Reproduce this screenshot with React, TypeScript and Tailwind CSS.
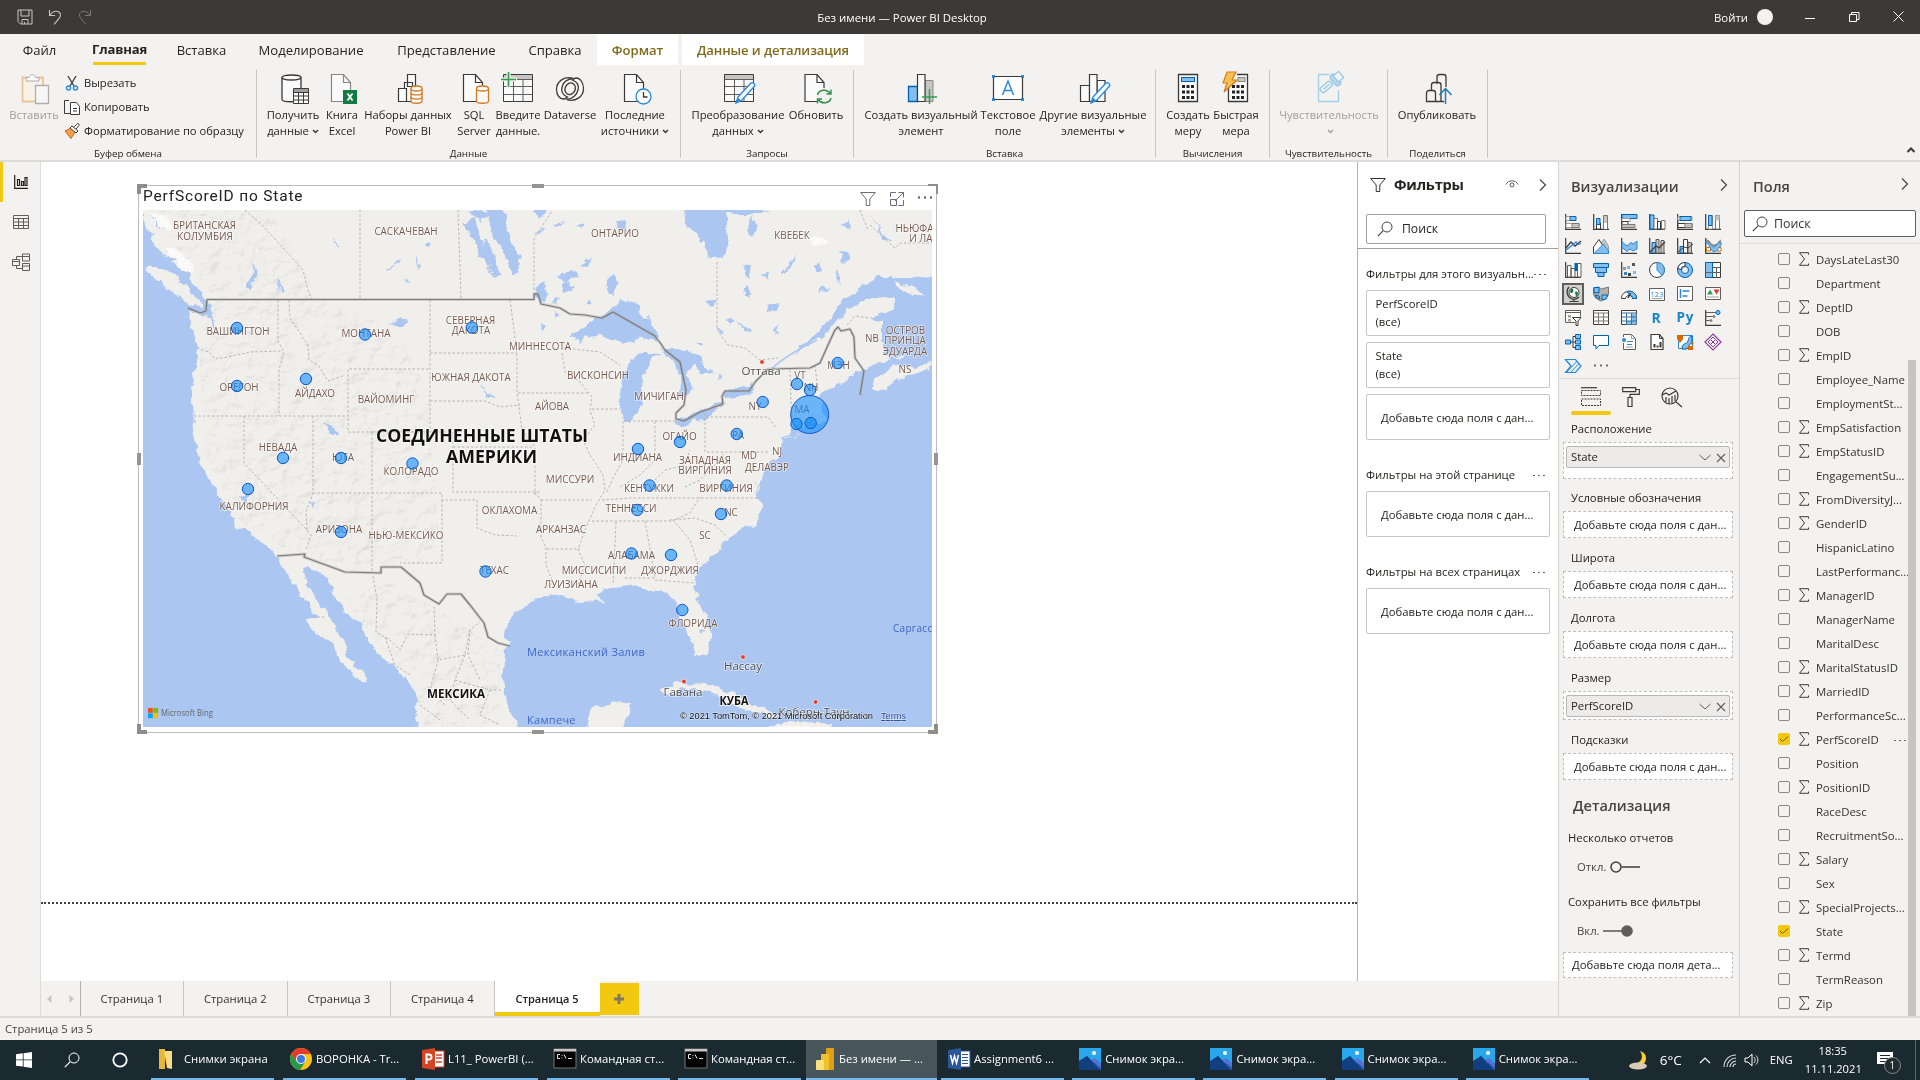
import React from "react";

const K = "#3b3a39";
const B = "#2b88d8";
const LB = "#83beec";
const G = "#a19f9d";

type SvgProps = { w?: number; h?: number; vb?: string; children: React.ReactNode; className?: string };
const S = ({ w = 16, h = 16, vb, children, className = "" }: SvgProps) => (
  <svg width={w} height={h} viewBox={vb ?? `0 0 ${w} ${h}`} fill="none" className={`shrink-0 overflow-visible ${className}`}>
    {children}
  </svg>
);

const ChevronRight = () => (
  <S w={8} h={12}><path d="M1 .5 6.500 6 1 11.500" stroke="#444" strokeWidth="1.200" /></S>
);
const ChevronDown = ({ c = "#333" }: { c?: string }) => (
  <S w={7} h={5} className="inline-block ml-[3px] mb-[1px]"><path d="M1 1l2.500 2.500L6 1" stroke={c} strokeWidth="1.400" /></S>
);
const Search = ({ c = "#444" }: { c?: string }) => (
  <S><circle cx="10" cy="6" r="5" stroke={c} /><path d="M6.300 9.700 .8 15.200" stroke={c} strokeWidth="1.200" /></S>
);
const Funnel = ({ c = "#333" }: { c?: string }) => (
  <S><path d="M.7 1.500h14.600L9.800 8v6.500H6.200V8z" stroke={c} /></S>
);

/* ---------- title bar ---------- */
const TitleBar = () => (
  <header className="flex h-[34px] items-center bg-[#3b3a39] text-white">
    <div className="flex w-[600px] items-center pl-[17px]">
      <S><path d="M1 1h14v14H3.500L1 12.500zM4 1v6h8V1M5 15v-4.500h6V15M7.500 15v-2" stroke="#c8c6c4" /></S>
      <S className="ml-[15px]"><path d="M1.500 1v5.500H7M1.800 6.200C4 2.500 8.500 1 11.500 3.500c3 3-.5 6-5.500 12" stroke="#c8c6c4" strokeWidth="1.100" /></S>
      <S className="ml-[12px]"><path d="M14.500 1v5.500H9M14.200 6.200C12 2.500 7.500 1 4.500 3.500c-3 3 .5 6 5.500 12" stroke="#797775" /></S>
    </div>
    <div className="w-[604px] pt-[1px] text-center text-[11.400px]">Без имени — Power BI Desktop</div>
    <div className="flex flex-1 items-center pl-[510px] text-[11.400px]">
      <span className="w-[33px] whitespace-nowrap pt-[1px]">Войти</span>
      <span className="ml-[10px] h-4 w-4 shrink-0 rounded-full bg-[#f3f2f1]" />
      <S w={10} h={10} className="ml-[32px]"><path d="M0 6.500h10" stroke="#fff" /></S>
      <S w={11} h={10} className="ml-[34px]"><path d="M.5 2.500h7v7h-7zM2.500 2.500v-2h7.500v7H7.500" stroke="#fff" /></S>
      <S w={11} h={11} className="ml-[33px]"><path d="M.5.5l10 10M10.500.5l-10 10" stroke="#fff" /></S>
    </div>
  </header>
);

/* ---------- menu ---------- */
const menu: [string, string][] = [
  ["Файл", "ml-[23px] w-[33px] pt-[2px]"],
  ["Главная", "ml-[37px] w-[53px] font-bold tracking-[-0.2px] border-b-[3px] border-[#f2c811] pt-[4px]"],
  ["Вставка", "ml-[31px] w-[49px] pt-[2px]"],
  ["Моделирование", "ml-[32px] w-[106px] pt-[2px]"],
  ["Представление", "ml-[33px] w-[99px] pt-[2px]"],
  ["Справка", "ml-[32px] w-[54px] pt-[2px]"],
  ["Формат", "ml-[15px] w-[81px] bg-white pt-[2px] font-semibold text-[#7f6b1c]"],
  ["Данные и детализация", "ml-[4px] w-[182px] bg-white pt-[2px] font-semibold tracking-[-0.1px] text-[#7f6b1c]"],
];
const Menu = () => (
  <nav className="flex h-[31px] bg-[#f3f2f1] text-[13.100px]">
    {menu.map(([t, c]) => (
      <div key={t} className={`flex items-center justify-center whitespace-nowrap ${c}`}>{t}</div>
    ))}
  </nav>
);

/* ---------- ribbon icons (32x32) ---------- */
const Pencil = () => (
  <>
    <path d="M15 24 27.500 10.500a2.300 2.300 0 0 1 3.500 3.300L18.500 27.500 13 30z" fill="#f3f9fd" stroke={B} strokeWidth="1.300" />
    <path d="M14.800 24.500l3.500 3.200L12.500 30z" fill={B} />
  </>
);
const Doc = ({ c = K }: { c?: string }) => (
  <><path d="M3.500 1.500h12l7 8v19h-19z" fill="#fafafa" stroke={c} strokeWidth="1.200" /><path d="M15.500 1.500v8h7" stroke={c} strokeWidth="1.200" /></>
);
const Cyl = ({ x, y, w, h, c, mid = false }: { x: number; y: number; w: number; h: number; c: string; mid?: boolean }) => (
  <g stroke={c} strokeWidth="1.300" fill="#fafafa">
    <path d={`M${x} ${y}v${h}c0 3 ${w} 3 ${w} 0v-${h}`} />
    <ellipse cx={x + w / 2} cy={y} rx={w / 2} ry="2.500" />
    {mid && <path d={`M${x} ${y + h / 3}c0 3 ${w} 3 ${w} 0M${x} ${y + (2 * h) / 3}c0 3 ${w} 3 ${w} 0`} fill="none" />}
  </g>
);
const Grid = () => (
  <><path d="M1.500 1.500h29v27h-29z" fill="#fafafa" stroke={K} /><path d="M2 2h28v4H2z" fill="#c8c6c4" /><path d="M1.500 6.500h29M1.500 13.500h29M1.500 21.500h29M11.500 6.500v22M21 6.500v22" stroke="#605e5c" /></>
);
const Calc = ({ x = 0 }: { x?: number }) => (
  <g transform={`translate(${x} 0)`}>
    <path d="M6.500 1.500h19v27h-19z" fill="#fafafa" stroke={K} strokeWidth="1.300" />
    {[12, 17.500, 23].map((y) => [10, 14.500, 19].map((a) => <rect key={`${a}-${y}`} x={a} y={y} width="3" height="3" fill="#222" />))}
  </g>
);
const RI: Record<string, React.ReactNode> = {
  get: <g transform="translate(1 0)"><Cyl x={4} y={4.500} w={19} h={22} c={K} /><path d="M15.500 15.500h15v15h-15z" fill="#fff" stroke={K} /><path d="M16 16h14v3.500H16z" fill="#a19f9d" /><path d="M15.500 19.500h15M15.500 23h15M15.500 27h15M20.500 19.500v11M25.500 19.500v11" stroke={K} /></g>,
  excel: <g transform="translate(2 0)"><Doc c="#8a8886" /><rect x="15" y="17" width="14" height="14" fill="#107c41" /><path d="M19.500 20.500l5 7M24.500 20.500l-5 7" stroke="#fff" strokeWidth="1.800" /></g>,
  pbi: <g transform="translate(4 0)"><path d="M11.500 1.500h8v12h-8zM8.500 9.500h8v19h-8z" fill="#fafafa" stroke={K} strokeWidth="1.200" /><path d="M2.500 15.500h8v13h-8z" fill="#fafafa" stroke={K} strokeWidth="1.200" /><Cyl x={15} y={15.500} w={11} h={12.500} c="#d67a1e" mid /></g>,
  sql: <g transform="translate(2 0)"><Doc /><Cyl x={16.500} y={15.500} w={12} h={12.500} c="#d67a1e" /></g>,
  enter: <><Grid /><path d="M6.500-1v15M0 6.500h15" stroke="#f3f2f1" strokeWidth="4" /><path d="M6.500-1v15M-1 6.500h15" stroke="#2f9e4f" strokeWidth="1.600" /></>,
  dv: <g transform="translate(-.5 0)"><path d="M20 5.500c-9-3-17 3-17 11 0 6 3.500 9.500 7 9.500 2 0 3-.8 4-2-5-2-6.500-6-5.500-10 1-4.500 5-8 11.500-8.500z" fill="#fafafa" stroke={K} strokeWidth="1.300" /><path d="M13 26.500c9 3 17-3 17-11 0-6-3.500-10.500-7-10.500-2 0-3 .8-4 2 5 2 6.500 6 5.500 10-1 4.500-5 9-11.500 9.500z" fill="#fafafa" stroke={K} strokeWidth="1.300" /><ellipse cx="16.500" cy="15.500" rx="5" ry="6" transform="rotate(25 16 16)" stroke={K} strokeWidth="1.300" /></g>,
  recent: <g transform="translate(2 0)"><Doc /><circle cx="22.500" cy="23.500" r="7.500" fill="#fff" stroke={B} strokeWidth="1.300" /><path d="M22.500 19v5h4" stroke={K} strokeWidth="1.300" /></g>,
  transform: <g transform="translate(1 0)"><Grid /><Pencil /></g>,
  refresh: <g transform="translate(1.500 0)"><Doc /><circle cx="22.500" cy="23.500" r="8.500" fill="#f3f2f1" /><path d="M16 22c1-5 9-7 13-1.500M29.500 16.500v4.500H25M29.500 25c-1 5-9 7-13 1.500M16 30.500V26h4.500" stroke="#2f8f46" strokeWidth="1.400" /></g>,
  visual: <g transform="translate(1 0)"><path d="M19 7.500h8v21h-8z" fill="#c8c6c4" stroke="#8a8886" /><path d="M2.500 13.500h9v15h-9z" fill={LB} stroke="#0063b1" strokeWidth="1.300" /><path d="M11.500 1.500h7.500v27h-7.500z" fill="#fafafa" stroke={K} strokeWidth="1.200" /><path d="M23.500 16v15M16 24h15" stroke="#2f9e4f" strokeWidth="1.400" /></g>,
  text: <><path d="M1.500 3.500h29v23h-29z" fill="#fff" stroke={K} strokeWidth="1.200" />{[[0, 2], [29, 2], [0, 25], [29, 25]].map(([x, y]) => <rect key={`${x}-${y}`} x={x} y={y} width="3" height="3" fill={B} />)}<path d="M10.500 22 16 8l5.500 14M12.500 17.500h7" stroke={B} strokeWidth="1.500" /></>,
  other: <g transform="translate(1 0)"><path d="M19 7.500h8v21h-8zM2.500 12.500h9v16h-9z" fill="#fafafa" stroke={K} strokeWidth="1.200" /><path d="M11.500 1.500h7.500v27h-7.500z" fill="#fafafa" stroke={K} strokeWidth="1.200" /><Pencil /></g>,
  calc: <><Calc /><rect x="9.500" y="4.500" width="13" height="4" fill={LB} stroke="#0063b1" /></>,
  quick: <><Calc x={2} /><path d="M5 0h12v11H5z" fill="#f3f2f1" /><rect x="18" y="4.500" width="7" height="4" fill="#c8c6c4" stroke="#8a8886" /><path d="M7-1h9l-4 8h5L4 19l3-9H3z" fill="#f8c04e" stroke="#d67a1e" strokeWidth="1.200" /></>,
  sens: <g opacity=".75" transform="translate(1 0)"><path d="M15 1.500H4.500v27h20V17" stroke="#8cc4e0" strokeWidth="1.400" /><g transform="rotate(-40 20 10)" stroke="#7db9da" strokeWidth="1.300" fill="#eef5f9"><rect x="20" y="2" width="6" height="13" rx="3" fill="#a8cfe2" /><path d="M24 4h7v8h-7z" /><rect x="5" y="5" width="13" height="6" rx="2" /><path d="M8 8h8" /></g></g>,
  publish: <g transform="translate(3 0)"><path d="M13 11V4a2.500 2.500 0 0 1 2.500-2.500h4A2.500 2.500 0 0 1 22 4v10M7.500 18v-6a2.500 2.500 0 0 1 2.500-2.500h4.500A2.500 2.500 0 0 1 17 12v16.500M2.500 28.500V20A2.500 2.500 0 0 1 5 17.500h4a2.500 2.500 0 0 1 2.500 2.500v8.500zM11 28.500h9" stroke={K} strokeWidth="1.300" /><path d="M21.500 31V16M15.500 22l6-6.500 6 6.500" stroke="#1a7db8" strokeWidth="1.500" /></g>,
  paste: <g opacity=".55" transform="translate(2 0)"><path d="M9 4.500H2.500v24h14M17 4.500h6v8" stroke="#e8a04c" strokeWidth="1.800" fill="#fdf1dc" /><path d="M6 8V4.500h3c.5-4 6-4 6.500 0H19V8z" fill="#fff" stroke="#797775" /><path d="M15.500 12.500h13v18h-13z" fill="#fafafa" stroke="#797775" strokeWidth="1.300" /></g>,
};

type Item = { i: string; a: string; b?: string; c: string; down?: boolean; off?: boolean };
const RibbonItem = ({ i, a, b, c, down, off }: Item) => (
  <div className={`flex shrink-0 flex-col items-center whitespace-nowrap leading-4 ${off ? "text-[#a19f9d]" : ""} ${c}`}>
    <S w={32} h={32}>{RI[i]}</S>
    <span className="mt-[2px]">{a}</span>
    <span className="h-4">{b}{down && <ChevronDown c={off ? "#a19f9d" : "#333"} />}</span>
  </div>
);
const groups: { t: string; c: string; items: Item[] }[] = [
  { t: "Данные", c: "w-[424px]", items: [
    { i: "get", a: "Получить", b: "данные", down: true, c: "ml-[9px] w-[54px]" },
    { i: "excel", a: "Книга", b: "Excel", c: "ml-[6px] w-[32px]" },
    { i: "pbi", a: "Наборы данных", b: "Power BI", c: "ml-[6px] w-[88px]" },
    { i: "sql", a: "SQL", b: "Server", c: "ml-[5px] w-[34px]" },
    { i: "enter", a: "Введите", b: "данные.", c: "ml-[4px] w-[46px]" },
    { i: "dv", a: "Dataverse", c: "ml-[2px] w-[54px]" },
    { i: "recent", a: "Последние", b: "источники", down: true, c: "ml-[5px] w-[66px]" },
  ] },
  { t: "Запросы", c: "w-[173px]", items: [
    { i: "transform", a: "Преобразование", b: "данных", down: true, c: "ml-[9px] w-[96px]" },
    { i: "refresh", a: "Обновить", c: "ml-[3px] w-[54px]" },
  ] },
  { t: "Вставка", c: "w-[302px]", items: [
    { i: "visual", a: "Создать визуальный", b: "элемент", c: "ml-[11px] w-[112px]" },
    { i: "text", a: "Текстовое", b: "поле", c: "ml-[4px] w-[54px]" },
    { i: "other", a: "Другие визуальные", b: "элементы", down: true, c: "ml-[4px] w-[108px]" },
  ] },
  { t: "Вычисления", c: "w-[114px]", items: [
    { i: "calc", a: "Создать", b: "меру", c: "ml-[10px] w-[44px]" },
    { i: "quick", a: "Быстрая", b: "мера", c: "ml-[4px] w-[44px]" },
  ] },
  { t: "Чувствительность", c: "w-[118px]", items: [
    { i: "sens", a: "Чувствительность", b: "", down: true, off: true, c: "ml-[10px] w-[98px]" },
  ] },
  { t: "Поделиться", c: "w-[100px]", items: [
    { i: "publish", a: "Опубликовать", c: "ml-[10px] w-[78px]" },
  ] },
];
const Ribbon = () => (
  <section className="flex h-[97px] border-b-2 border-[#dddcda] bg-[#f3f2f1] text-[11.200px]">
    <div className="mt-[5px] flex h-[88px] w-[257px] flex-col border-r border-[#c8c6c4]">
      <div className="flex h-[78px] shrink-0 pt-[3px]">
        <RibbonItem i="paste" a="Вставить" off c="ml-[10px] w-[48px]" />
        <div className="ml-[7px] flex flex-col whitespace-nowrap">
          <div className="-mt-[2px] flex h-6 items-center gap-[5px]">
            <S w={14} h={16}><path d="M3 1l6 10M11 1 5 11" stroke={K} strokeWidth="1.300" /><circle cx="3.500" cy="13" r="2" stroke={B} strokeWidth="1.400" /><circle cx="10.500" cy="13" r="2" stroke={B} strokeWidth="1.400" /></S>Вырезать
          </div>
          <div className="flex h-6 items-center gap-[5px]">
            <S w={14} h={16}><path d="M5 14.500H-.5V1.500H4" stroke={K} /><path d="M5.500 3.500h6l3 4v8h-9z" fill="#fff" stroke={K} /><path d="M8 9.500h4M8 12h4" stroke={K} /></S>Копировать
          </div>
          <div className="flex h-6 items-center gap-[5px]">
            <S w={14} h={16}><path d="M0 8l6-3 4 4-4 6.500z" fill="#f6a04a" stroke="#c8641a" /><path d="M5 5l6 5 2-2-6-5zM9 4l3.500-3.500c1.500 0 2 1 1.500 2L11 6" fill="#fff" stroke={K} /></S>Форматирование по образцу
          </div>
        </div>
      </div>
      <div className="text-center text-[9.800px] leading-[11px]">Буфер обмена</div>
    </div>
    {groups.map((g) => (
      <div key={g.t} className={`mt-[5px] flex h-[88px] shrink-0 flex-col border-r border-[#c8c6c4] ${g.c}`}>
        <div className="flex h-[78px] shrink-0 pt-[3px]">{g.items.map((it) => <RibbonItem key={it.i} {...it} />)}</div>
        <div className="text-center text-[9.800px] leading-[11px]">{g.t}</div>
      </div>
    ))}
    <div className="flex flex-1 items-end justify-end pr-[5px] pb-[7px]"><S w={8} h={6}><path d="M.5 5 4 1.500 7.500 5" stroke={K} strokeWidth="2" /></S></div>
  </section>
);

/* ---------- map ---------- */
const land = "M143 205V218L148 232 157 247 167 260 180 268 192 283 203 293 206 300 209 303 214 322 209 316 203 314 189 311 192 330 195 345 197 355 195 375 192 390 192 410 195 420 192 432 194 445 200 457 204 472 212 483 219 497 226 507 234 518 237 528 245 530 254 537 265 545 273 551 277 556 282 563 287 573 293 585 300 595 307 602 316 615 305 620 317 633 333 645 338 658 353 673 362 683 367 678 360 670 350 660 347 650 342 637 333 623 325 610 315 597 307 583 303 568 308 567 323 573 330 585 333 597 343 610 360 623 368 637 368 645 383 657 397 670 410 683 417 700 415 713 420 730H521L507 707 502 690 503 667 505 650 510 645 505 635 507 623 517 612 530 605 538 597 560 593 577 602 587 600 603 602 597 593 613 587 640 584 653 594 663 589 673 597 678 613 685 627 692 643 698 654 708 653 711 637 707 618 697 597 694 580 700 565 717 553 728 540 743 527 755 525 762 510 758 498 754 478 758 492 763 478 767 463 778 457 783 443 782 438 790 433 793 427 813 425 828 423 823 407 820 395 833 387 850 377 863 370 875 364 890 360 882 340 882 323 870 317 895 310 895 298 873 297 847 310 833 327 817 340 790 356 813 337 833 317 843 300 860 287 880 277 910 277 940 276V205Z";
const islands = [
  "M145 267L167 270 183 283 200 300 203 310 187 303 167 288 150 273Z",
  "M873 390L874 377 893 367 913 367 932 362 930 369 903 377 883 392Z",
  "M893 283L910 285 925 297 907 293Z",
  "M887 352L896 356 907 356 900 360Z",
  "M660 690L673 683 707 684 733 693 757 705 783 717 770 717 747 710 727 702 710 692 680 688 667 696Z",
  "M587 730L590 710 607 703 630 702 630 713 622 730Z",
  "M768 730L775 724 800 722 832 725 832 730Z",
  "M782 438L812 431 800 434 786 438Z",
];
const lakes = [
  "M686 205L685 223 703 243 710 259 723 257 728 243 726 205Z",
  "M570 338L590 323 610 310 620 300 637 303 643 317 653 320 658 342 643 337 627 343 613 342 603 335 590 337 580 341Z",
  "M630 422L623 420 619 400 623 373 630 360 647 352 662 353 650 360 643 377 642 390 638 413Z",
  "M660 348L687 350 700 357 712 373 700 373 695 363 687 373 692 390 684 400 680 393 682 377 673 360Z",
  "M676 420L693 413 713 407 723 401 725 405 707 417 683 425Z",
  "M722 394L733 387 750 387 755 382 753 392 737 397 724 398Z",
  "M487 208H503L508 230 515 250 520 262 517 276 512 275 508 258 500 245 490 225Z",
  "M483 240L490 245 495 262 500 275 493 277 488 262Z",
  "M463 223L475 218 480 235 487 255 497 270 497 279 490 272 485 258 478 255 475 240Z",
  "M468 212L482 210 490 215 480 220Z",
  "M324 422L333 427 338 436 331 436Z",
  "M384 270L395 266 401 258 399 265 390 271ZM415 254L420 266 418 270Z",
  "M606 279L614 276 617 283 612 293 607 290Z",
  "M537 286L543 282 549 294 541 301 536 296Z",
  "M557 276L573 270 578 276 564 281Z",
  "M580 265L592 258 588 266ZM551 224L565 222 556 227Z",
  "M780 275L795 256 790 268 782 276ZM742 265L752 262 750 279 746 276Z",
  "M838 254L847 252 850 259 843 263ZM836 269L841 275 838 286Z",
  "M706 301L717 300 713 308ZM765 306L778 304 774 312 768 311Z",
  "M750 215L757 225 752 238 748 234ZM870 215L876 225 884 240 892 242 882 232Z",
  "M143 228L156 234 150 240ZM150 214L158 226 166 232 156 226ZM163 252L176 262 168 262ZM180 270L190 282 188 270Z",
  "M247 288L252 272 254 262 256 270 251 290ZM278 276L283 292 280 293Z",
  "M386 324L397 321 401 316 407 320 403 326Z",
  "M480 382L488 392 495 401 489 397Z",
  "M712 210L745 208 770 214 725 214ZM615 222L626 221 627 230 618 229Z",
  "M738 322L745 332 752 330 744 327ZM817 291L831 290 823 286Z",
  "M534 232L548 229 540 234ZM577 226L584 223 582 229ZM840 226L848 220 850 229Z",
  "M561 284L568 280 572 290 565 293ZM552 302L560 298 556 306ZM584 303L590 300 588 305ZM813 265L820 262 822 270 816 272ZM764 274L770 270 768 280ZM743 290L748 286 750 296Z",
  "M717 325L724 332 720 336ZM728 318L736 322 730 325ZM774 330L780 322 778 334ZM532 210L546 210 540 218ZM694 343L704 341 700 346ZM716 372L722 378 718 380Z",
  "M240 495L249 493 246 503ZM308 503L313 500 312 506ZM700 628L704 630 702 635ZM553 313L559 315 555 318ZM540 325L547 327 543 332ZM423 246L430 244 428 249ZM403 278L409 280 406 282ZM335 238L338 246 336 246Z",
];
const dashes = [
  "M360 210V299M458 210L461 299M534 299V238L552 211M245 210L262 225 285 250 303 270 308 290 312 299",
  "M278 300V341L284 352 279 370V416M289 300L290 318 300 333 308 345 309 360 318 365 328 381 345 375",
  "M197 348L209 352 215 359 228 357 250 352 281 351M194 416H348V369H430M430 300V432H348V416M430 353H517M430 401H485L500 407 520 405",
  "M244 416V463L305 528 311 535 306 550M313 416V493L306 512 307 530M313 493H442V500H477V528L495 535 517 536M372 433V573M372 432H453V492H540M442 500V563H400",
  "M453 447H534M510 300L517 353V392L522 430 535 447V495M518 393H588M535 492L541 500V537L546 548V565L552 580",
  "M562 353L565 372 580 382 592 397 590 410 595 425 583 440 590 455 603 475 605 490 596 505 585 530 578 550 585 565 578 585",
  "M564 348L600 352 620 365M592 409H620M623 421V460L612 480 607 492M624 421H655V460L640 475 620 487M655 421H676M705 409V452H770M706 417H768L776 428",
  "M602 500L630 498 758 498M592 521H672L690 513 700 497M541 500H592M547 549H580M616 522L613 585M645 521L652 560 655 578H623M673 520L690 540 698 565M655 580L694 583",
  "M655 480L665 470 685 465 690 450M685 487L700 480 715 465 725 452M670 520L695 518 715 525 727 537M790 370L792 430M815 365L818 392",
  "M717 262V330L728 345 745 348 760 360 778 358M847 325L855 316 870 318M860 210L868 230M870 225L895 248 900 243H932",
  "M373 576L377 600 376 632 390 640 400 650 408 634 435 635 434 605M435 635L438 660 465 655 470 630 480 622M438 660L430 690 445 705M465 655L455 680 490 690 502 690M490 690L480 715 500 725M385 637L395 665 410 675M470 630L468 655 480 680M455 680L450 700 470 720M420 705L440 720M313 617H325",
];
const labels: [number, number, string][] = [
  [204.500, 229, "БРИТАНСКАЯ"], [205, 239.500, "КОЛУМБИЯ"], [406, 234.500, "САСКАЧЕВАН"], [238, 335, "ВАШИНГТОН"], [366, 337, "МОНТАНА"],
  [470.500, 324, "СЕВЕРНАЯ"], [471, 334, "ДАКОТА"], [239, 391, "ОРЕГОН"], [315, 397, "АЙДАХО"], [386, 403, "ВАЙОМИНГ"], [471, 380.500, "ЮЖНАЯ ДАКОТА"],
  [278, 450.500, "НЕВАДА"], [343, 461, "ЮТА"], [411, 475, "КОЛОРАДО"], [254, 510, "КАЛИФОРНИЯ"], [339, 533, "АРИЗОНА"], [406, 539, "НЬЮ-МЕКСИКО"],
  [615, 237, "ОНТАРИО"], [792, 239, "КВЕБЕК"], [928, 232, "НЬЮФАУНДЛ"], [930, 242, "И ЛАБРА"], [540, 350, "МИННЕСОТА"], [598, 378.500, "ВИСКОНСИН"],
  [659, 399.500, "МИЧИГАН"], [552, 409.500, "АЙОВА"], [872, 341.500, "NB"], [905.500, 333.500, "ОСТРОВ"], [905, 343.500, "ПРИНЦА"], [905, 355, "ЭДУАРДА"],
  [838.500, 368.500, "МЭН"], [905, 372.500, "NS"], [800, 378.500, "VT"], [811, 391, "NH"], [755, 409.500, "NY"], [802, 413, "MA"], [811, 426, "RI"], [738, 438.500, "PA"],
  [679.500, 440, "ОГАЙО"], [637.500, 460.500, "ИНДИАНА"], [705, 463.500, "ЗАПАДНАЯ"], [705, 474, "ВИРГИНИЯ"], [749, 458.500, "MD"], [777, 454.500, "NJ"],
  [767, 471, "ДЕЛАВЭР"], [570, 483, "МИССУРИ"], [649, 491.500, "КЕНТУККИ"], [726, 491.500, "ВИРГИНИЯ"], [631, 512, "ТЕННЕССИ"], [731, 516, "NC"],
  [705, 539, "SC"], [509.500, 514, "ОКЛАХОМА"], [561, 532.500, "АРКАНЗАС"], [631.500, 559, "АЛАБАМА"], [670, 573.500, "ДЖОРДЖИЯ"], [594, 573.500, "МИССИСИПИ"],
  [571, 588, "ЛУИЗИАНА"], [494.500, 573.500, "ТЕХАС"], [693, 627, "ФЛОРИДА"],
];
const bubbles: [number, number, number?][] = [
  [237, 328], [365, 334.500], [472, 327.500], [237, 386], [306, 379], [283, 458], [341, 458], [412.500, 463.500], [248, 489], [341, 532],
  [797, 384], [810, 390], [837.700, 363], [762.700, 402], [809.700, 414.500, 19], [796.500, 424], [810.700, 423], [736.700, 434], [680, 442], [638, 449],
  [649.500, 485.500], [726.700, 485.500], [637.300, 510], [721, 514], [631.500, 553.500], [671, 555], [682.300, 610], [485.500, 571.500],
];
const MapView = () => (
  <svg width={789} height={517} viewBox="143 210 789 517" className="block" fontFamily="'Open Sans','Noto Sans',sans-serif">
    <defs>
      <filter id="rough" x="-5%" y="-5%" width="110%" height="110%">
        <feTurbulence type="fractalNoise" baseFrequency=".1" numOctaves="3" seed="4" result="n" />
        <feDisplacementMap in="SourceGraphic" in2="n" scale="9" xChannelSelector="R" yChannelSelector="G" />
      </filter>
      <filter id="relief" x="0" y="0" width="100%" height="100%">
        <feTurbulence type="fractalNoise" baseFrequency=".07 .09" numOctaves="4" seed="9" result="n" />
        <feDiffuseLighting in="n" surfaceScale="4" lightingColor="#ffffff" diffuseConstant="1.150">
          <feDistantLight azimuth="225" elevation="60" />
        </feDiffuseLighting>
        <feComposite in2="SourceGraphic" operator="in" />
      </filter>
    </defs>
    <rect x="143" y="210" width="789" height="517" fill="#abc6f1" />
    <g filter="url(#rough)">
      <path d={land} fill="#f0efeb" />
      {islands.map((d) => <path key={d} d={d} fill="#f0efeb" />)}
    </g>
    <path d="M160 210H270L320 300 400 330 430 400 440 560 400 565 350 570 282 548 240 520 205 455 199 340 216 300 170 240ZM385 580L430 605 500 650 500 727H425L412 680 375 640 345 600Z" fill="#fff" filter="url(#relief)" opacity=".2" className="mix-blend-multiply" />
    <path d="M150 213l14 3 12 10-8 6-14-6zM165 246l12 4 20 16-8 8-14-12zM808 237l14-2 6 8-14 4z" fill="#fff" opacity=".7" filter="url(#rough)" />
    <g filter="url(#rough)" fill="#abc6f1">{lakes.map((d) => <path key={d} d={d} />)}</g>
    <path d="M817 340C800 348 785 356 770 370M200 300l10 10 4 18" stroke="#abc6f1" strokeWidth="1.500" fill="none" />
    <g stroke="#b9b5b1" strokeWidth="1" strokeDasharray="2.500 2" fill="none">{dashes.map((d) => <path key={d} d={d} />)}</g>
    <g fill="none" strokeLinejoin="round">
      {["M188 308L200 313 206 311 207 299.500H534V294H538L541 304 560 308 570 314 585 315 602 318 613 312 655 336 661 344 665 350 680 362 686 390 684 405 676 413 676 419 684 421 700 412 723 404 722 396 725 391H749L756 381 768 369 810 368 820 363 828 345 835 330 838 327 841 331 850 329 854 337 855 358 864 371 860 395",
        "M277 556L305 554 304 557 345 572 381 573V567H401L420 583 424 595 439 604 447 594H461L470 605 484 623 488 637 498 643 510 646"].map((d) => (
        <g key={d}><path d={d} stroke="#a9a9a9" strokeWidth="3" opacity=".45" /><path d={d} stroke="#7b7b7b" strokeWidth="1.200" /></g>
      ))}
    </g>
    <g fontSize="9.900" fill="#75594f" textAnchor="middle" stroke="#fff" strokeOpacity=".6" strokeWidth="1.500" paintOrder="stroke">
      {labels.map(([x, y, t]) => <text key={`${x}${t}`} x={x} y={y}>{t}</text>)}
    </g>
    <g fontSize="11" fill="#4068c4" letterSpacing=".3">
      <text x="527" y="656">Мексиканский Залив</text><text x="527" y="724">Кампече</text><text x="893" y="632" fontSize="10">Саргассово</text>
    </g>
    <g fontSize="11.500" fill="#4f4f4f" textAnchor="middle" stroke="#fff" strokeOpacity=".6" strokeWidth="1.500" paintOrder="stroke">
      <text x="761" y="375">Оттава</text><text x="743" y="670">Нассау</text><text x="683" y="696">Гавана</text><text x="814" y="716">Коберн-Таун</text>
    </g>
    <g fill="#e03a2c" stroke="#fff" strokeWidth=".6">
      <circle cx="762" cy="362" r="2.300" /><circle cx="743" cy="657" r="2.300" /><circle cx="684" cy="681.500" r="2.300" /><circle cx="815.500" cy="702" r="2.300" />
    </g>
    <g fill="#111" fontWeight="700" textAnchor="middle" stroke="#fff" strokeOpacity=".7" strokeWidth="2" paintOrder="stroke">
      <text x="482" y="441.500" fontSize="18" textLength="212" lengthAdjust="spacingAndGlyphs">СОЕДИНЕННЫЕ ШТАТЫ</text>
      <text x="491.500" y="462.500" fontSize="18" textLength="91" lengthAdjust="spacingAndGlyphs">АМЕРИКИ</text>
      <text x="456" y="698" fontSize="12.500" textLength="58" lengthAdjust="spacingAndGlyphs">МЕКСИКА</text>
      <text x="734" y="705" fontSize="11.500" textLength="29" lengthAdjust="spacingAndGlyphs">КУБА</text>
      <text x="788" y="735" fontSize="11">ГАИТИ</text>
    </g>
    <g fill="#118dff" fillOpacity=".6" stroke="#1159c4" strokeWidth="1">
      {bubbles.map(([x, y, r = 5.700]) => <circle key={`${x}-${y}`} cx={x} cy={y} r={r} />)}
    </g>
    <g><rect x="148" y="708" width="4.800" height="4.800" fill="#f25022" /><rect x="153.300" y="708" width="4.800" height="4.800" fill="#7fba00" /><rect x="148" y="713.300" width="4.800" height="4.800" fill="#00a4ef" /><rect x="153.300" y="713.300" width="4.800" height="4.800" fill="#ffb900" /></g>
    <text x="161" y="716" fontSize="8.300" fill="#666" textLength="52" lengthAdjust="spacingAndGlyphs">Microsoft Bing</text>
    <g fontFamily="'Liberation Sans',sans-serif" fontSize="9.300" fill="#111" stroke="#fff" strokeOpacity=".5" strokeWidth="1" paintOrder="stroke">
      <text x="680" y="719" textLength="193">© 2021 TomTom, © 2021 Microsoft Corporation</text>
      <text x="881" y="719" fill="#2b4a94" textDecoration="underline" textLength="25">Terms</text>
    </g>
  </svg>
);

const Visual = () => (
  <div className="relative mt-[23px] ml-[97px] h-[548px] w-[799px] border border-[#bdbbb9] pl-[4px]">
    <div className="flex h-[24px] items-center justify-between pr-[3px]">
      <h2 className="mt-[-3px] w-[170px] font-['Roboto'] text-[15.500px] tracking-[0.820px] whitespace-nowrap text-[#222]">PerfScoreID по State</h2>
      <div className="mt-[2px] flex items-center">
        <Funnel c="#6e6c7a" />
        <S className="ml-[13px]"><path d="M1.500 6V1.500H7M1.500 8.500h6v6h-6zM9.500 14.500h5V9M6 10 14.500 1.500M9.500 1.500h5v5" stroke="#6e6c7a" /></S>
        <S w={16} h={16} className="ml-[12px]"><path d="M1 6.500h2M7 6.500h2M13 6.500h2" stroke="#555" strokeWidth="2" /></S>
      </div>
    </div>
    <MapView />
    {["-top-[2px] -left-[2px] border-t-4 border-l-4", "-top-[2px] -right-[2px] border-t-2 border-r-2", "-bottom-[2px] -left-[2px] border-b-4 border-l-4", "-bottom-[2px] -right-[2px] border-b-4 border-r-4"].map((c) => (
      <i key={c} className={`absolute h-[10px] w-[10px] border-[#8f8d8b] ${c}`} />
    ))}
    <i className="absolute -top-[2px] left-[393px] h-[4px] w-[12px] bg-[#979593]" />
    <i className="absolute -bottom-[2px] left-[393px] h-[4px] w-[12px] bg-[#979593]" />
    <i className="absolute top-[267px] -left-[2px] h-[12px] w-[4px] bg-[#979593]" />
    <i className="absolute top-[267px] -right-[2px] h-[12px] w-[4px] bg-[#979593]" />
  </div>
);

/* ---------- left navigation ---------- */
const LeftNav = () => (
  <aside className="w-[41px] shrink-0 border-r border-[#dddcda] bg-[#f3f2f1]">
    <div className="flex h-[40px] items-center border-l-[3px] border-[#f2c811] pl-[11px]">
      <S w={14} h={14}><path d="M.7 0v13.300H14M3.500 4.500h2v6h-2zM7.500 6.500h2v4h-2zM11 2.500h2v8h-2z" stroke="#201f1e" strokeWidth="1.200" /></S>
    </div>
    <div className="flex h-[40px] items-center pl-[13px]">
      <S><path d="M.5 1.500h15v13H.5zM.5 4.500h15M.5 8h15M.5 11.500h15M5.500 4.500v10M10.500 4.500v10" stroke="#605e5c" /></S>
    </div>
    <div className="flex h-[40px] items-center pl-[12px]">
      <S w={18} h={18}><path d="M.5 6.500h7v6h-7zM.5 8.500h7M10.500 1h7v7h-7zM10.500 3.500h7M10.500 10.500h7v7h-7zM10.500 13h7M4.500 6.500v-3h6M4.500 12.500v3h6" stroke="#605e5c" /></S>
    </div>
  </aside>
);

/* ---------- filters ---------- */
const Dots = () => <span className="flex gap-[3px]">{[0, 1, 2].map((i) => <i key={i} className="h-[1px] w-[2px] bg-[#666]" />)}</span>;
const DropText = "Добавьте сюда поля с дан...";
const FilterSection = ({ t, children, c = "" }: { t: string; children?: React.ReactNode; c?: string }) => (
  <section className={c}>
    <div className="flex h-[32px] items-center justify-between pr-[5px]"><span className="whitespace-nowrap">{t}</span><Dots /></div>
    <div className="flex flex-col gap-[6px]">
      {children}
      <div className="flex h-[46px] items-center rounded-[2px] border border-[#c8c6c4] pt-[2px] pl-[14px] whitespace-nowrap">{DropText}</div>
    </div>
  </section>
);
const FilterCard = ({ t }: { t: string }) => (
  <div className="h-[46px] rounded-[2px] border border-[#c8c6c4] pt-[4px] pl-[8.500px] leading-[18px]">{t}<br />(все)</div>
);
const Filters = () => (
  <aside className="w-[201px] shrink-0 border-l border-[#b3b0ad] bg-white text-[11.300px] text-[#252423]">
    <div className="flex h-[46px] items-center pl-[12px]">
      <Funnel />
      <span className="ml-[8px] w-[100px] text-[14.600px] font-bold tracking-[-0.2px]">Фильтры</span>
      <S w={14} h={10} className="-mt-[2px] ml-[11px]"><path d="M1 5.500C3 .5 11 .5 13 5.500" stroke="#605e5c" /><circle cx="7" cy="6" r="2" stroke="#605e5c" /></S>
      <span className="-mt-[1px] ml-[20px]"><ChevronRight /></span>
    </div>
    <div className="h-[41px] border-b border-[#a19f9d] pt-[6px] pl-[8px]">
      <div className="flex h-[30px] w-[180px] items-center gap-[9px] rounded-[2px] border border-[#a19f9d] pl-[10px] text-[12.200px]"><Search />Поиск</div>
    </div>
    <div className="w-[192px] pl-[8px]">
      <FilterSection t="Фильтры для этого визуальн..." c="pt-[9px]"><FilterCard t="PerfScoreID" /><FilterCard t="State" /></FilterSection>
      <FilterSection t="Фильтры на этой странице" c="pt-[19px]" />
      <FilterSection t="Фильтры на всех страницах" c="pt-[19px]" />
    </div>
  </aside>
);

/* ---------- visualizations ---------- */
const ax = <path d="M.7 0v15.300H16" stroke={K} strokeWidth="1.200" />;
const D = "#0063b1";
const viz: React.ReactNode[] = [
  <>{ax}<path d="M1 2.500h9v4H1z" fill="#fff" stroke={G} /><path d="M5 2.500h6v4H5z" fill={LB} stroke={D} /><path d="M1 9.500h13v4H1z" fill="#fff" stroke={G} /><path d="M7 9.500h7v4H7z" fill="#c8c6c4" stroke="#797775" /></>,
  <>{ax}<path d="M3.500 9h4v6h-4z" fill="#fff" stroke={K} /><path d="M3.500 4.500h3.500v6H3.500z" fill={LB} stroke={D} /><path d="M10.500 1.500h4v13.500h-4z" fill="#c8c6c4" stroke="#797775" /><path d="M11 9h3v6h-3z" fill="#fff" /></>,
  <>{ax}<path d="M1 .5h15v4H1z" fill={LB} stroke={D} /><path d="M1 4.500h8v3H1z" fill="#fff" stroke={G} /><path d="M1 7.500h6v3H1z" fill="#fff" stroke={K} /><path d="M1 10.500h13v3H1z" fill="#c8c6c4" stroke="#797775" /></>,
  <>{ax}<path d="M1 1h4v14H1z" fill={LB} stroke={D} /><path d="M5 4.500h3.500v10.500H5zM12.500 6.500H16v8.500h-3.500z" fill="#fff" stroke="#797775" /><path d="M8.500 7.500h3v7.500h-3z" fill="#fff" stroke={K} /></>,
  <>{ax}<path d="M1 2.500h14v4H1z" fill="#fff" stroke={G} /><path d="M3 2.500h11v4H3z" fill={LB} stroke={D} /><path d="M1 9.500h14v4H1z" fill="#fff" stroke={K} /><path d="M8 9.500h7v4H8z" fill="#c8c6c4" stroke="#797775" /></>,
  <>{ax}<path d="M3.500 1.500h4v13.500h-4z" fill="#fff" stroke={G} /><path d="M3.500 1.500h3.500v10H3.500z" fill={LB} stroke={D} /><path d="M10.500 1.500h4v13.500h-4z" fill="#fff" stroke="#797775" /><path d="M10.500 1.500h4v5h-4z" fill="#c8c6c4" /></>,
  <>{ax}<path d="M1 10 6 4l4 4 6-5" stroke={K} strokeWidth="1.300" /><path d="M1 12l4-3 6-5 2 2.500 3-1" stroke={B} strokeWidth="1.300" /></>,
  <><path d="M5 10 11 1l4.500 7v7.500H8z" fill="#c8c6c4" stroke={G} /><path d="M.5 15.500V9L6 1.500 13 13v2.500z" fill="#fff" stroke={K} /><path d="M1 15.500 10.500 6l5 7v2.500z" fill={LB} stroke={B} /></>,
  <>{ax}<path d="M1 4l5 4 4-3.500 2 1.500 4-3v8l-4 2-3-2-3 2.500-5-4z" fill={LB} stroke={B} /></>,
  <>{ax}<path d="M3 4.500h3.500v10.500H3z" fill={LB} stroke={D} /><path d="M7 1.500h3v13.500H7zM12 2.500h3v12.500h-3z" fill="#c8c6c4" stroke="#605e5c" /><path d="M1 14l6-6 3 2 6-6" stroke={K} strokeWidth="1.200" /></>,
  <>{ax}<path d="M3 8.500h3.500v6.500H3z" fill={LB} stroke={D} /><path d="M6.500 1.500h4v13.500h-4z" fill="#fff" stroke={K} /><path d="M11 4.500h3.500v10.500H11z" fill="#c8c6c4" stroke="#605e5c" /><path d="M1 14l6-5 4 1 5-4" stroke={K} /></>,
  <>{ax}<path d="M1.500 9.500h4v3.500h-4zM12 9.500h4v3.500h-4z" fill="#fff" stroke="#d86a00" /><path d="M1 5c4 0 4 8.500 8 8.500s4-4 7-6V4c-3 0-5 5-7 5S4 3 1 3z" fill={LB} stroke={B} /><path d="M1 1.500c5 0 4 5 8 5s4-4 7-5v2c-3 1-4 5-7 5S4 4 1 4z" fill="#8a8886" /></>,
  <>{ax}<path d="M2.500 3.500H6v11.500H2.500zM6 6.500h4v8.500H6zM12.500 1.500H16v13.500h-3.500z" fill="#fff" stroke="#605e5c" /><path d="M9.500 1h3v8h-3z" fill={D} /></>,
  <><path d="M.5 1.500h15v4H.5z" fill={LB} stroke={D} /><path d="M2.500 5.500h11v5h-11z" fill={LB} stroke={D} /><path d="M5 10.500h6v4H5z" fill={LB} stroke={D} /></>,
  <>{ax}<rect x="11" y="1" width="3" height="3" fill="#555" /><rect x="6" y="4" width="3" height="3" fill={B} opacity=".6" /><rect x="2" y="5" width="3" height="3" fill="#999" /><rect x="3" y="10" width="3" height="3" fill={B} /><rect x="12" y="9" width="3" height="3" fill={LB} /><rect x="7" y="11" width="3" height="3" fill="#444" /></>,
  <><circle cx="8" cy="8" r="7.500" fill="#fff" stroke={K} /><path d="M8 .5a7.500 7.500 0 0 1 5 13L8 8z" fill={LB} stroke={B} /></>,
  <><circle cx="8" cy="8" r="7.500" fill={LB} stroke={D} /><path d="M8 .5A7.500 7.500 0 0 0 .6 6.500L4 7.500a4 4 0 0 1 4-3.500z" fill="#fff" stroke={K} /><circle cx="8" cy="8" r="3.500" fill="#f3f2f1" stroke={D} /></>,
  <><path d="M.5.5h15v15H.5z" fill="#fff" stroke={K} /><path d="M.5.5h7v15h-7z" fill={LB} stroke={D} /><path d="M.5 10.500h15M7.500 5.500h8M11.500 5.500v10" stroke="#605e5c" /></>,
  <><circle cx="9" cy="6.500" r="5" fill="#fff" stroke={K} /><path d="M6 3c2-1 3 1 2 3s-2 1-3-.5zM10 6c2-1 3 0 3 2L11 11z" fill="#107c41" /><path d="M4 1C1 4 1.500 10 6 12.500c3 1.500 6 .5 8-1.500M9 13.500v2M4.500 15.500h9" stroke={K} strokeWidth="1.200" /></>,
  <><path d="M.5 2l5-1 3 2 7-2v7l-3 5-5 2-5-3-2-4z" fill="#b3b0ad" stroke="#797775" /><path d="M1 1.500h5V7l-5-.5zM9 9h6l-2 4-4 1zM2 9l4 1 1 3-4-2z" fill={LB} stroke={D} /></>,
  <><path d="M.5 12.500C.5 3 15.500 3 15.500 12.500h-4c0-4-7-4-7 0z" fill="#fff" stroke={K} /><path d="M6 5.500c5-1.500 9.500 2 9.500 7h-4c0-2-1-3-3-3.300z" fill={LB} stroke={D} /><path d="M7 12 9.500 7" stroke={K} strokeWidth="1.500" /></>,
  <><path d="M.5 2.500h15v12H.5z" fill="#fff" stroke="#605e5c" /><path d="M3 12.500h10" stroke={G} /><text x="8" y="10.500" fontSize="7.500" textAnchor="middle" fill={B}>123</text></>,
  <><path d="M.5.5h15v14H.5z" fill="#fff" stroke="#605e5c" /><path d="M3.500 3v9M5.500 5h7M5.500 10h5" stroke={B} strokeWidth="1.500" /></>,
  <><path d="M.5 1.500h15v12H.5z" fill="#fff" stroke="#605e5c" /><path d="M2 8.500 5 3.500l3 5z" fill="#2f9e4f" /><path d="M8.500 3.500h6l-3 5z" fill="#e03a2c" /><path d="M2 11h12" stroke={G} /></>,
  <><path d="M10 12.500H.5v-12h15v6" stroke="#605e5c" fill="#fff" /><path d="M.5 2.500h15" stroke="#605e5c" /><path d="M3 5h3v2.500H3zM3 9h3v2.500H3z" fill={G} /><path d="M7.500 7.500h8.500L13 11v4.500h-2V11z" fill="#fff" stroke={K} /></>,
  <><path d="M.5.5h15v14H.5z" fill="#fff" stroke={K} /><path d="M.5 3h15M.5 7h15M.5 11h15M5.500 3v12M10.500 3v12" stroke="#797775" /></>,
  <><path d="M.5.5h15v14H.5z" fill="#fff" stroke={K} /><path d="M5.500 11h10v3.500h-10zM10.500 3.500h5v11h-5z" fill={LB} /><path d="M.5 3h15M.5 7h15M.5 11h15M5.500 3v12M10.500 3v12" stroke="#3a6f9f" /></>,
  <><text x="7" y="13" fontSize="14" fontWeight="700" textAnchor="middle" fill="#1a84c7">R</text></>,
  <><text x="8" y="12" fontSize="13.500" fontWeight="700" textAnchor="middle" fill="#1a84c7" textLength="17">Py</text></>,
  <><path d="M.7 0v15.300H16" stroke={K} strokeWidth="1.200" /><path d="M1 2.500h10M1 6.500h7M1 10.500h4" stroke="#605e5c" /><circle cx="13" cy="2.500" r="2" fill={LB} stroke={D} /><circle cx="9" cy="6.500" r="1.500" fill="#888" /><circle cx="6" cy="10.500" r="1.500" fill="#888" /></>,
  <><path d="M5 8h3M8 2.500v11M8 2.500h3M8 13.500h3M8 8h3" stroke={K} /><path d="M.5 6h5v4h-5zM10.500.5h5v4h-5zM10.500 6h5v4h-5zM10.500 11.500h5v4h-5z" fill={LB} stroke={D} /></>,
  <><path d="M.5 1.500h15v10H6L3 15v-3.500H.5z" fill="#fff" stroke={D} /></>,
  <><path d="M2.500 3V.5h8l4 4v11h-12V9" fill="#fff" stroke="#605e5c" /><path d="M10.500.5v4h4M5 13h7" stroke={G} /><circle cx="3" cy="6" r="2" fill={B} /><path d="M6 7.500h6M6 10.500h5" stroke={B} /></>,
  <><path d="M2 .5h8.500l3.500 4v11H2z" fill="#fff" stroke={K} strokeWidth="1.200" /><path d="M10.500.5v4H14" stroke={K} /><path d="M4.500 10h2v3.500h-2zM7.500 11.500h2v2h-2zM10.500 8h2v5.500h-2z" fill={K} /></>,
  <><path d="M1.500 1.500h14v13h-14z" fill="#fff" stroke={B} /><path d="M5 15c0-7 5-4 6-8s2-5 4-5v7c-4 1-3 5-5 6z" fill={LB} stroke={D} /><path d="M0 1h6v4L3 9 0 5z" fill="#d86a00" /><path d="M11 12h5v4h-5zM14 8h2.500v2.500H14z" fill="#d86a00" /></>,
  <><path d="M8 0l8 8-8 8-8-8z" stroke="#8a3a9c" strokeWidth="1.200" fill="#fff" /><path d="M8 3l2.500 2.500L8 8 5.500 5.500zM8 8l2.500 2.500L8 13l-2.500-2.500zM3 8l2.500-2.500L8 8l-2.500 2.500zM13 8l-2.500-2.500L8 8l2.500 2.500z" stroke="#8a3a9c" /></>,
  <><path d="M.5 1.500h10l5.500 6.500-5.500 6.500H.5L6 8z" fill="#e8f3fb" stroke={B} strokeWidth="1.200" /><path d="M2 14 12 3M6 14l8-8.500M1 2l5 6" stroke={B} /></>,
  <><path d="M1 7.500h2M7 7.500h2M13 7.500h2" stroke="#7a6a5a" strokeWidth="1.800" /></>,
];
const Well = ({ t, c = "", children }: { t: string; c?: string; children: React.ReactNode }) => (
  <><div className={`pl-[12px] leading-[20px] ${c}`}>{t}</div>{children}</>
);
const dashed = "ml-[4px] w-[170px] border border-dashed border-[#c0bebc] bg-white";
const DropBox = () => <div className={`${dashed} flex h-[27px] items-center pt-[2px] pl-[10px] whitespace-nowrap`}>{DropText}</div>;
const Pill = ({ t }: { t: string }) => (
  <div className="flex h-[22px] w-[164px] items-center rounded-[2px] border border-[#b9b7b5] bg-[#edebe9] pt-[1px] pl-[4px]">
    <span className="w-[128px]">{t}</span>
    <S w={12} h={7}><path d="M.5 1 6 6l5.500-5" stroke="#605e5c" /></S>
    <S w={8} h={8} className="ml-[6px]"><path d="M0 0l8 8M8 0 0 8" stroke="#605e5c" strokeWidth="1.100" /></S>
  </div>
);
const Viz = () => (
  <aside className="w-[181px] shrink-0 border-l border-[#d6d4d2] bg-[#f3f2f1] text-[11.300px] text-[#252423]">
    <div className="flex h-[50px] items-center justify-between pr-[11px] pl-[12px]">
      <span className="text-[14.600px] font-semibold text-[#484644]">Визуализации</span><span className="mb-[5px]"><ChevronRight /></span>
    </div>
    <div className="grid h-[167px] grid-cols-[repeat(6,28px)] auto-rows-[24px] border-b border-[#dddcda] pl-[3px]">
      {viz.map((n, i) => (
        <div key={i} className={`-mt-[1px] flex h-[22px] w-[22px] items-center justify-center ${i === 18 ? "border-2 border-[#605e5c] bg-[#d2d0ce]" : ""}`}><S>{n}</S></div>
      ))}
    </div>
    <div className="flex h-[32px] items-center pl-[22px]">
      <S w={20} h={20} className="mt-[4px]"><path d="M0 .7h16" stroke={K} strokeWidth="1.200" /><path d="M.5 3.500h19v5H.5zM.5 12h19v6.500H.5z" stroke={K} strokeDasharray="2 1" /></S>
      <S w={18} h={20} className="mt-[4px] ml-[21px]"><path d="M.7.7h13v4h-13zM13.700 2.500h3.600v4.800H8v3M6 10.500h4v9H6z" stroke={K} strokeWidth="1.200" /></S>
      <S w={21} h={20} className="mt-[4px] ml-[21px]"><circle cx="9" cy="9" r="8" stroke={K} strokeWidth="1.200" /><path d="M15 15l6 5M1.500 8 5 6l3 2 7-4M5 10v5M8 11v6M11 9v7M14 8v6" stroke={K} strokeWidth="1.200" /></S>
    </div>
    <div className="ml-[12px] h-[4px] w-[40px] rounded bg-[#f2c811]" />
    <Well t="Расположение" c="pt-[4px] h-[27px]"><div className={`${dashed} h-[37px] p-[3px] pl-[2px]`}><Pill t="State" /></div></Well>
    <Well t="Условные обозначения" c="pt-[9px] h-[32px]"><DropBox /></Well>
    <Well t="Широта" c="pt-[10px] h-[33px]"><DropBox /></Well>
    <Well t="Долгота" c="pt-[10px] h-[33px]"><DropBox /></Well>
    <Well t="Размер" c="pt-[10px] h-[33px]"><div className={`${dashed} h-[29px] p-[3px] pl-[2px]`}><Pill t="PerfScoreID" /></div></Well>
    <Well t="Подсказки" c="pt-[10px] h-[33px]"><DropBox /></Well>
    <div className="pt-[15px] pl-[14px] text-[14.600px] leading-[20px] font-semibold text-[#484644]">Детализация</div>
    <div className="pt-[13px] pl-[9px] leading-[20px]">Несколько отчетов</div>
    <div className="flex items-center pt-[9px] pl-[18px] leading-[20px] text-[#484644]"><span className="w-[33px]">Откл.</span><S w={30} h={12}><path d="M12 6h18" stroke="#484644" strokeWidth="1.600" /><circle cx="6" cy="6" r="5" stroke="#484644" strokeWidth="1.600" /></S></div>
    <div className="pt-[15px] pl-[9px] leading-[20px]">Сохранить все фильтры</div>
    <div className="flex items-center pt-[9px] pl-[18px] leading-[20px] text-[#484644]"><span className="w-[26px]">Вкл.</span><S w={30} h={12}><path d="M0 6h20" stroke="#605e5c" strokeWidth="1.600" /><circle cx="24" cy="6" r="5.800" fill="#605e5c" /></S></div>
    <div className={`${dashed} mt-[11px] flex h-[26px] items-center pt-[1px] pl-[8px] whitespace-nowrap`}>Добавьте сюда поля дета...</div>
  </aside>
);

/* ---------- fields ---------- */
const fields = ["*DaysLateLast30", "Department", "*DeptID", "DOB", "*EmpID", "Employee_Name", "EmploymentSt...", "*EmpSatisfaction", "*EmpStatusID", "EngagementSu...", "*FromDiversityJ...", "*GenderID", "HispanicLatino", "LastPerformanc...", "*ManagerID", "ManagerName", "MaritalDesc", "*MaritalStatusID", "*MarriedID", "PerformanceSc...", "*PerfScoreID", "Position", "*PositionID", "RaceDesc", "RecruitmentSo...", "*Salary", "Sex", "*SpecialProjects...", "State", "*Termd", "TermReason", "*Zip"];
const Fields = () => (
  <aside className="w-[181px] shrink-0 border-l border-[#d6d4d2] bg-[#f3f2f1] text-[#333]">
    <div className="flex h-[48px] items-center justify-between pr-[11px] pl-[13px]">
      <span className="mt-[2px] text-[14.600px] font-semibold text-[#484644]">Поля</span><span className="mb-[4px]"><ChevronRight /></span>
    </div>
    <div className="h-[34px] border-b border-[#dddcda] pl-[4px]">
      <div className="flex h-[27px] w-[172px] items-center gap-[6px] rounded-[2px] border border-[#605e5c] bg-white pt-[1px] pl-[7px] text-[12.400px]"><Search />Поиск</div>
    </div>
    <div className="flex h-[772px]">
      <div className="w-[168px] shrink-0 pt-[4px] pl-[38px]">
        {fields.map((f) => {
          const sum = f.startsWith("*");
          const name = sum ? f.slice(1) : f;
          const on = name === "PerfScoreID" || name === "State";
          return (
            <div key={f} className="flex h-[24px] items-center text-[11.400px]">
              <span className={`mb-[2px] flex h-3 w-3 shrink-0 items-center justify-center rounded-[2px] border ${on ? "border-[#f2c811] bg-[#f2c811]" : "border-[#8a8886]"}`}>
                {on && <S w={8} h={6}><path d="M0 3l2.500 2.500L8 .5" stroke="#6b5a10" /></S>}
              </span>
              <span className="mb-[2px] ml-[9px] w-[11px] shrink-0">{sum && <S w={10} h={14}><path d="M9.500 2.500V.7H.5L5.500 7 .5 13.300H9.500V11.500" stroke={K} /></S>}</span>
              <span className="ml-[6px] w-[78px] whitespace-nowrap">{name}</span>
              {name === "PerfScoreID" && <Dots />}
            </div>
          );
        })}
      </div>
      <div className="mt-[116px] w-[8px] bg-[#c8c6c4]" />
    </div>
  </aside>
);

/* ---------- page tabs ---------- */
const PageTabs = () => (
  <div className="flex h-[35px] bg-[#f3f2f1] text-[11.300px] text-[#333]">
    <div className="flex w-[39.500px] items-center gap-[17px] border-r border-[#b3b0ad] pl-[6px]">
      <S w={5} h={8}><path d="M4.500 0v8L0 4z" fill="#c8c6c4" /></S><S w={5} h={8}><path d="M.5 0v8L5 4z" fill="#c8c6c4" /></S>
    </div>
    {[1, 2, 3, 4].map((n) => <div key={n} className="flex w-[103.500px] items-center justify-center border-r border-[#c8c6c4] pt-[1px]">Страница {n}</div>)}
    <div className="flex w-[105px] items-center justify-center border-b-4 border-[#f2c811] bg-white pt-[5px] font-semibold text-[#201f1e]"><span className="text-[11px]">Страница 5</span></div>
    <div className="mt-[2px] flex h-[32px] w-[39px] items-center justify-center bg-[#f2c811]"><S w={12} h={12}><path d="M6 1v10M1 6h10" stroke="#7f7a60" strokeWidth="3" /></S></div>
  </div>
);

/* ---------- taskbar ---------- */
const Photo = <><rect width="22" height="22" fill="#28a8ea" /><path d="M0 14 8 8l7 7 3-3 4 4v6H0z" fill="#1d5fb0" /><path d="M12 12l4-2 6 6v4z" fill="#5a6fd8" /><path d="M0 13 8 8l13 14H0z" fill="#123f80" /><circle cx="15" cy="5" r="2" fill="#fff" /></>;
const Cmd = <><rect y="1" width="22" height="19" fill="#050505" stroke="#8a8a8a" strokeWidth=".8" /><rect y="1" width="22" height="2.500" fill="#c8c8c8" /><path d="M6 6.500H3.500v4H6M8 7v.8M8 9.500v.8M10 6.500l2 4M14 10.500h4" stroke="#e8e8e8" /></>;
const tasks: { t: string; c: string; icon: React.ReactNode }[] = [
  { t: "Снимки экрана", c: "ml-0 w-[123px]", icon: <><path d="M1 1h6v20H1z" fill="#e8b73a" /><path d="M6 3h8v18l-5-1z" fill="#fbdb85" /></> },
  { t: "ВОРОНКА - Tr...", c: "ml-[9px] w-[123px]", icon: <><circle cx="11" cy="11" r="11" fill="#fbc116" /><path d="M1.500 5.500A11 11 0 0 0 10 22l5.500-8.500L6 13z" fill="#279847" /><path d="M1.500 5.500A11 11 0 0 1 20.700 6H11L6 13z" fill="#e33b2e" /><circle cx="11" cy="11" r="5" fill="#fff" /><circle cx="11" cy="11" r="4" fill="#3b78e7" /></> },
  { t: "L11_ PowerBI (...", c: "ml-[9px] w-[123px]", icon: <><rect x="11" y="3" width="11" height="16" fill="#fff" stroke="#d24625" /><path d="M14 7h6M14 10h6M14 14h6" stroke="#d24625" strokeWidth="1.500" /><path d="M0 2 13 0v22L0 20z" fill="#d24625" /><path d="M4.500 16V6.500H7a2.500 2.500 0 0 1 0 5H4.500" stroke="#fff" strokeWidth="2" /></> },
  { t: "Командная ст...", c: "ml-[9px] w-[123px]", icon: Cmd },
  { t: "Командная ст...", c: "ml-[8px] w-[123px]", icon: Cmd },
  { t: "Без имени — ...", c: "ml-[5px] w-[131px] bg-[#48565b]", icon: <g transform="translate(3 0)"><rect x="10" y="0" width="8" height="22" rx="1" fill="#e0a013" /><rect x="5" y="6" width="8" height="16" rx="1" fill="#f2c22c" /><rect x="0" y="12" width="8" height="10" rx="1" fill="#fbe07c" /></g> },
  { t: "Assignment6 ...", c: "ml-[4px] w-[123px]", icon: <><rect x="11" y="3" width="11" height="16" fill="#fff" stroke="#2b579a" /><path d="M14 6.500h6M14 9.500h6M14 12.500h6M14 15.500h6" stroke="#2b579a" strokeWidth="1.200" /><path d="M0 2 13 0v22L0 20z" fill="#2b579a" /><path d="M2.500 7 4.500 15l2-7 2 7 2-8" stroke="#fff" strokeWidth="1.500" /></> },
  ...[1, 2, 3, 4].map(() => ({ t: "Снимок экра...", c: "ml-[8.200px] w-[123px]", icon: Photo })),
];
const Taskbar = () => (
  <footer className="flex h-[40px] items-center bg-[#1b2a30] text-[11.300px] whitespace-nowrap text-white">
    <div className="flex w-[151px] items-center pl-[16px]">
      <S><path d="M0 2.200 6.800 1.300V7.500H0zM7.600 1.200 16 0v7.500H7.600zM0 8.300h6.800v6.300L0 13.700zM7.600 8.300H16V16l-8.400-1.200z" fill="#fff" /></S>
      <span className="ml-[32px]"><Search c="#fff" /></span>
      <S className="ml-[32px]"><circle cx="8" cy="8" r="6.700" stroke="#fff" strokeWidth="1.800" /></S>
    </div>
    {tasks.map((k, i) => (
      <div key={i} className={`flex h-[40px] shrink-0 items-center border-b-2 border-[#76b9ed] pl-[7px] ${k.c}`}>
        <S w={22} h={22}>{k.icon}</S><span className="ml-[4px] pt-[1px]">{k.t}</span>
      </div>
    ))}
    <div className="flex flex-1 items-center pl-[39px]">
      <S w={22} h={20}><path d="M12 1c4 6 2 12-7 13 6 3 13 1 13-6 0-4-3-6-6-7z" fill="#fbd034" /><ellipse cx="10" cy="16" rx="9" ry="3.500" fill="#d8cdb4" /></S>
      <span className="ml-[10px] w-[36px] pt-[1px] text-[13.500px]">6°C</span>
      <S w={12} h={8} className="ml-[3px]"><path d="M1 7l5-5 5 5" stroke="#fff" strokeWidth="1.200" /></S>
      <S w={13} h={13} className="ml-[12px]"><path d="M1 13C1 6 6 1 13 1M4 13c0-5 4-9 9-9M7 13c0-3 3-6 6-6M10 13c0-2 1-3 3-3" stroke="#ddd" strokeWidth="1.100" /></S>
      <S w={16} h={14} className="ml-[8px]"><path d="M1 5h3l4-4v12L4 9H1z" stroke="#fff" /><path d="M10 4c1.500 2 1.500 4 0 6M12 2.500c2.500 3 2.500 6 0 9" stroke="#ddd" /></S>
      <span className="ml-[10px] w-[24px] text-[11.300px]">ENG</span>
      <span className="ml-[11px] w-[56px] text-center text-[11.200px] leading-[18px]">18:35<br />11.11.2021</span>
      <span className="relative ml-[16px]">
        <S w={16} h={18}><path d="M0 1h16v12h-4v4l-4-4H0z" fill="#fff" /><path d="M3 4.500h10M3 7.500h10M3 10.500h7" stroke="#1b2a30" /></S>
        <i className="absolute top-[6px] left-[7px] flex h-[17px] w-[17px] items-center justify-center rounded-full border border-[#888] bg-[#222c30] text-[10px] not-italic">1</i>
      </span>
    </div>
    <i className="mr-[4px] h-[40px] w-px bg-[#59666b]" />
  </footer>
);

export default function App() {
  return (
    <div className="flex h-[1080px] w-[1920px] flex-col overflow-hidden bg-[#f3f2f1] font-['Open_Sans','Noto_Sans',sans-serif] text-[#252423]">
      <TitleBar />
      <Menu />
      <Ribbon />
      <main className="flex h-[854px] shrink-0">
        <LeftNav />
        <div className="flex w-[1517px] shrink-0 flex-col">
          <div className="flex h-[819px]">
            <div className="flex h-[819px] w-[1316px] flex-col bg-white">
              <Visual />
              <div className="mt-[169px] border-t-2 border-dotted border-[#444]" />
            </div>
            <Filters />
          </div>
          <PageTabs />
        </div>
        <Viz />
        <Fields />
      </main>
      <div className="flex h-[24px] shrink-0 items-center border-t-2 border-[#dddcda] bg-[#f3f2f1] pl-[5px] text-[11.300px] text-[#484644]">Страница 5 из 5</div>
      <Taskbar />
    </div>
  );
}
